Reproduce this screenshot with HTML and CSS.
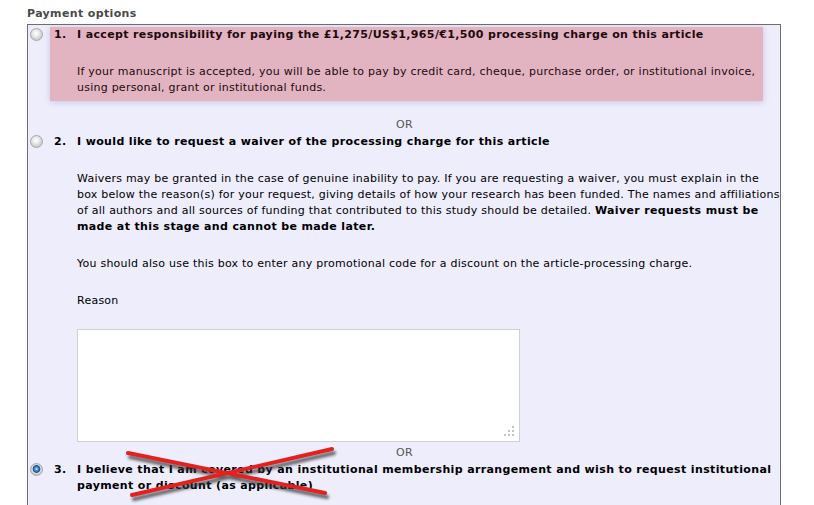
FILE: index.html
```html
<!DOCTYPE html>
<html>

<head>
  <meta charset='utf-8'>
  <title>Payment options</title>
  <meta name='viewport' content='width=device-width, initial-scale=1'>
  <link rel="stylesheet" href="styles.css">
</head>

<body>
  <div class="page">
    <h3 class="section-title">Payment options</h3>
    <div class="panel">
      <div class="option highlight">
        <input type="radio" name="payment" value="pay">
        <div class="option-body">
          <span class="num">1.</span>
          <strong>I accept responsibility for paying the £1,275/US$1,965/€1,500 processing charge on this article</strong>
          <p>If your manuscript is accepted, you will be able to pay by credit card, cheque, purchase order, or institutional invoice, using personal, grant or institutional funds.</p>
        </div>
      </div>
      <div class="or">OR</div>
      <div class="option">
        <input type="radio" name="payment" value="waiver">
        <div class="option-body">
          <span class="num">2.</span>
          <strong>I would like to request a waiver of the processing charge for this article</strong>
          <p>Waivers may be granted in the case of genuine inability to pay. If you are requesting a waiver, you must explain in the box below the reason(s) for your request, giving details of how your research has been funded. The names and affiliations of all authors and all sources of funding that contributed to this study should be detailed. <strong>Waiver requests must be made at this stage and cannot be made later.</strong></p>
          <p>You should also use this box to enter any promotional code for a discount on the article-processing charge.</p>
          <label class="reason-label" for="reason">Reason</label>
          <div class="textbox">
            <textarea id="reason"></textarea>
          </div>
        </div>
      </div>
      <div class="or after-box">OR</div>
      <div class="option">
        <input type="radio" name="payment" value="member" checked>
        <div class="option-body">
          <span class="num">3.</span>
          <strong>I believe that I am covered by an institutional membership arrangement and wish to request institutional payment or discount (as applicable)</strong>
        </div>
      </div>
    </div>

    <!-- red cross drawn over option 3 -->
    <svg class="cross" width="814" height="505" viewBox="0 0 814 505">
      <defs>
        <filter id="shade" x="-10%" y="-50%" width="120%" height="200%">
          <feGaussianBlur stdDeviation="1.5"/>
        </filter>
      </defs>
      <g stroke="#333" stroke-width="4" stroke-linecap="round" opacity="0.75" filter="url(#shade)">
        <line x1="130" y1="457" x2="327" y2="497"/>
        <line x1="334" y1="453" x2="134" y2="499"/>
      </g>
      <g stroke="#e3211f" stroke-width="4" stroke-linecap="round">
        <line x1="128" y1="453" x2="325" y2="493"/>
        <line x1="332" y1="449" x2="132" y2="495"/>
      </g>
    </svg>
  </div>
</body>

</html>
```

FILE: styles.css
```css
* {
  box-sizing: border-box;
  margin: 0;
  padding: 0;
}

body {
  font-family: "DejaVu Sans", Verdana, sans-serif;
  font-size: 11px;
  line-height: 16px;
  letter-spacing: 0.24px;
  color: #000;
  background: #fff;
}

strong,
.num,
.section-title {
  letter-spacing: 0.36px;
}

.page {
  position: relative;
  padding: 6px 0 0 27px;
}

.section-title {
  font-size: 11px;
  font-weight: bold;
  color: #4a4a4a;
  margin-bottom: 2px;
}

.panel {
  width: 754px;
  border: 1px solid #6e6e6e;
  background: #ededfc;
  padding: 2px 0 40px 1px;
}

.option {
  display: grid;
  grid-template-columns: 21px 1fr;
  position: relative;
  z-index: 0;
}

.option-body {
  display: grid;
  grid-template-columns: 23px 1fr;
  padding: 0 0 0 4px;
}

.option-body p,
.option-body .reason-label,
.option-body .textbox {
  grid-column: 2;
}

.num {
  font-weight: bold;
}

.option p {
  margin-top: 21px;
}

.highlight .option-body {
  padding-bottom: 5px;
  color: #1e0a0e;
}

.highlight::before {
  content: "";
  position: absolute;
  top: 0;
  bottom: 0;
  left: 21px;
  right: 17px;
  background: #e2b4c1;
  box-shadow: 0 1px 6px rgba(90, 80, 140, 0.25);
  z-index: -1;
}

input[type="radio"] {
  appearance: none;
  width: 13px;
  height: 13px;
  margin: 1px 0 0 1px;
  border-radius: 50%;
  border: 1px solid #a8a8a8;
  background: radial-gradient(circle at 45% 40%, #ffffff 0, #ececec 3px, #cdcdcd 6px);
}

input[type="radio"]:checked {
  background: radial-gradient(circle at 50% 45%, #c8ecff 0, #4d9be0 1.5px, #1b4d8a 3.5px, #dcdcdc 4.2px, #c4c4c4 6px);
}

.or {
  text-align: center;
  color: #555;
  margin-top: 16px;
}

.or.after-box {
  margin-top: 3px;
}

.or+.option {
  margin-top: 1px;
}

.reason-label {
  display: block;
  margin-top: 21px;
}

.textbox {
  position: relative;
  width: 443px;
  height: 113px;
  margin-top: 20px;
}

textarea {
  display: block;
  width: 100%;
  height: 100%;
  border: 1px solid #d0d0d0;
  background: #fff;
  resize: none;
  font: inherit;
}

/* resize grip dots */
.textbox::after {
  content: "";
  position: absolute;
  right: 6px;
  bottom: 6px;
  width: 2px;
  height: 2px;
  background: #c4c4c4;
  box-shadow: -4px 0 #c4c4c4, -8px 0 #c4c4c4, 0 -4px #c4c4c4, -4px -4px #c4c4c4, 0 -8px #c4c4c4;
}

.cross {
  position: absolute;
  left: 0;
  top: 0;
  pointer-events: none;
}
```
